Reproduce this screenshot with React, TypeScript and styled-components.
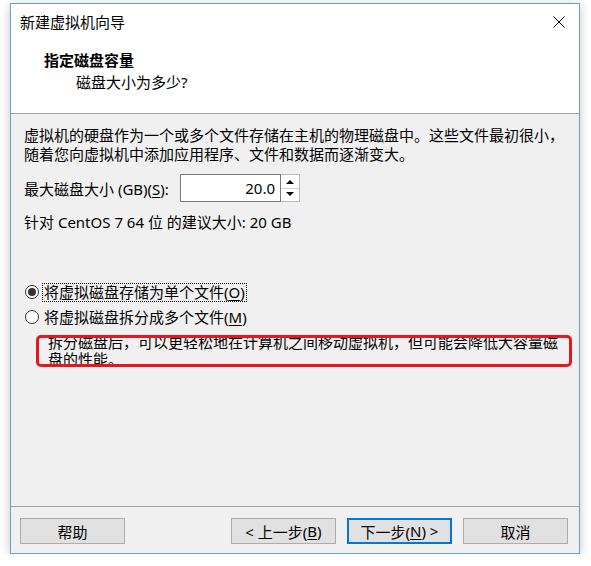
import React from 'react';
import styled, { createGlobalStyle } from 'styled-components';

const GlobalStyle = createGlobalStyle`
    body {
        margin: 0;
        background: #ffffff;
        font-family: "Noto Sans", "Noto Sans CJK SC", sans-serif;
        font-size: 15px;
        color: #000;
    }
`;

const Page = styled.div`
    padding: 3px 0 0 10px;
`;

const Window = styled.div`
    box-sizing: border-box;
    width: 570px;
    height: 551px;
    display: flex;
    flex-direction: column;
    background: #f0f0f0;
    border: 1px solid #6a9fd6;
    box-shadow: 0 2px 10px rgba(0, 0, 0, 0.22);
`;

const TitleBar = styled.div`
    height: 36px;
    display: flex;
    align-items: center;
    justify-content: space-between;
    padding-left: 9px;
    background: #fff;
`;

const TitleText = styled.span`
    font-family: "Noto Sans CJK SC", sans-serif;
    line-height: 20px;
`;

const CloseButton = styled.div`
    width: 40px;
    height: 36px;
    display: flex;
    align-items: center;
    justify-content: center;
`;

const Header = styled.div`
    background: #fff;
    padding: 10px 0 21px 33px;
    border-bottom: 1px solid #a0a0a0;
`;

const HeaderTitle = styled.div`
    font-family: "Noto Sans CJK SC", sans-serif;
    font-weight: 700;
    line-height: 20px;
`;

const HeaderSub = styled.div`
    margin: 2px 0 0 32px;
    line-height: 20px;
`;

const Body = styled.div`
    flex: 1;
    padding: 12px 0 0 13px;
`;

const Para = styled.p`
    margin: 0;
    width: 545px;
    line-height: 19px;
`;

const SizeRow = styled.div`
    display: flex;
    align-items: center;
    height: 28px;
    margin-top: 10px;
`;

const SizeLabel = styled.span`
    width: 156px;
`;

const SpinBox = styled.div`
    display: flex;
    height: 28px;
`;

const NumberInput = styled.div`
    box-sizing: border-box;
    width: 101px;
    height: 28px;
    padding-right: 5px;
    display: flex;
    align-items: center;
    justify-content: flex-end;
    background: #fff;
    border: 1px solid #7a7a7a;
`;

const SpinButtons = styled.div`
    box-sizing: border-box;
    width: 19px;
    height: 28px;
    display: flex;
    flex-direction: column;
    border: 1px solid #b9b9b9;
    border-left: none;
    background: #fff;
`;

const SpinHalf = styled.div<{ $top?: boolean }>`
    flex: 1;
    display: flex;
    align-items: center;
    justify-content: center;
    border-bottom: ${(p) => (p.$top ? '1px solid #d4d4d4' : 'none')};
`;

const Hint = styled.div`
    margin-top: 10px;
    line-height: 20px;
`;

const Options = styled.div`
    margin-top: 50px;
    display: flex;
    flex-direction: column;
    gap: 5px;
`;

const RadioRow = styled.div`
    display: flex;
    align-items: center;
    height: 20px;
`;

const RadioCircle = styled.span<{ $checked?: boolean }>`
    box-sizing: border-box;
    width: 14px;
    height: 14px;
    margin-left: 1px;
    border-radius: 50%;
    border: 1px solid #333;
    background: #fff;
    display: flex;
    align-items: center;
    justify-content: center;

    &::after {
        content: '';
        display: ${(p) => (p.$checked ? 'block' : 'none')};
        width: 8px;
        height: 8px;
        border-radius: 50%;
        background: #333;
    }
`;

const RadioLabel = styled.span<{ $focused?: boolean }>`
    margin-left: 3px;
    padding: 0 1px;
    line-height: 17px;
    border: 1px dotted ${(p) => (p.$focused ? '#000' : 'transparent')};
`;

const U = styled.span`
    text-decoration: underline;
    text-underline-offset: 2px;
`;

const Note = styled.div`
    position: relative;
    width: 515px;
    margin-top: 7px;
    padding-left: 24px;
    line-height: 17px;
`;

const RedMark = styled.div`
    position: absolute;
    top: 1px;
    bottom: 1px;
    left: 12px;
    right: -9px;
    border: 3px solid #e8161e;
    border-radius: 5px;
    pointer-events: none;
`;

const Footer = styled.div`
    display: flex;
    align-items: center;
    padding: 11px 11px 9px 9px;
    border-top: 1px solid #a0a0a0;
`;

const Spacer = styled.div`
    flex: 1;
`;

const Button = styled.div<{ $default?: boolean }>`
    box-sizing: border-box;
    width: 105px;
    height: 26px;
    display: flex;
    align-items: center;
    justify-content: center;
    background: #e1e1e1;
    border: ${(p) => (p.$default ? '2px solid #0078d7' : '1px solid #adadad')};
    & + & {
        margin-left: 11px;
    }
`;

const Arrow = ({ up }: { up?: boolean }) => (
    <svg width="8" height="5" viewBox="0 0 8 5">
        <path d={up ? 'M0 5 L4 1 L8 5 Z' : 'M0 0 L4 4 L8 0 Z'} fill="#000" />
    </svg>
);

const App: React.FC = () => (
    <Page>
        <GlobalStyle />
        <Window>
            <TitleBar>
                <TitleText>新建虚拟机向导</TitleText>
                <CloseButton>
                    <svg width="12" height="12" viewBox="0 0 12 12">
                        <path d="M0.5 0.5 L11.5 11.5 M11.5 0.5 L0.5 11.5" stroke="#000" strokeWidth="1" />
                    </svg>
                </CloseButton>
            </TitleBar>
            <Header>
                <HeaderTitle>指定磁盘容量</HeaderTitle>
                <HeaderSub>磁盘大小为多少?</HeaderSub>
            </Header>
            <Body>
                <Para>
                    虚拟机的硬盘作为一个或多个文件存储在主机的物理磁盘中。这些文件最初很小，随着您向虚拟机中添加应用程序、文件和数据而逐渐变大。
                </Para>
                <SizeRow>
                    <SizeLabel>
                        最大磁盘大小 (GB)(<U>S</U>):
                    </SizeLabel>
                    <SpinBox>
                        <NumberInput>20.0</NumberInput>
                        <SpinButtons>
                            <SpinHalf $top>
                                <Arrow up />
                            </SpinHalf>
                            <SpinHalf>
                                <Arrow />
                            </SpinHalf>
                        </SpinButtons>
                    </SpinBox>
                </SizeRow>
                <Hint>针对 CentOS 7 64 位 的建议大小: 20 GB</Hint>
                <Options>
                    <RadioRow>
                        <RadioCircle $checked />
                        <RadioLabel $focused>
                            将虚拟磁盘存储为单个文件(<U>O</U>)
                        </RadioLabel>
                    </RadioRow>
                    <RadioRow>
                        <RadioCircle />
                        <RadioLabel>
                            将虚拟磁盘拆分成多个文件(<U>M</U>)
                        </RadioLabel>
                    </RadioRow>
                </Options>
                <Note>
                    拆分磁盘后，可以更轻松地在计算机之间移动虚拟机，但可能会降低大容量磁盘的性能。
                    <RedMark />
                </Note>
            </Body>
            <Footer>
                <Button>帮助</Button>
                <Spacer />
                <Button>
                    &lt; 上一步(<U>B</U>)
                </Button>
                <Button $default>
                    下一步(<U>N</U>) &gt;
                </Button>
                <Button>取消</Button>
            </Footer>
        </Window>
    </Page>
);

export default App;
